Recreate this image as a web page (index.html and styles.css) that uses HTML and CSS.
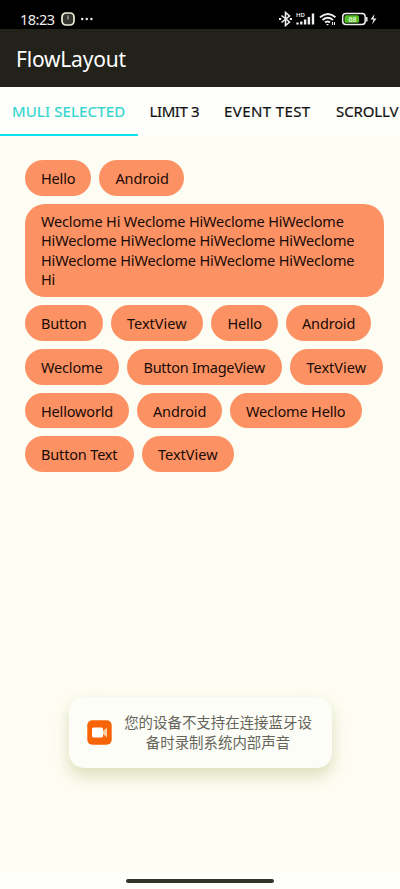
FILE: index.html
```html
<!DOCTYPE html>
<html lang="en">
<head>
<meta charset="utf-8">
<meta name="viewport" content="width=device-width, initial-scale=1">
<title>FlowLayout</title>
<link rel="stylesheet" href="styles.css">
</head>
<body>
<header class="status">
  <span class="clock">18:23</span>
  <svg class="alarm" width="14" height="14" viewBox="0 0 14 14"><rect x="1" y="1" width="12" height="12" rx="4" fill="#34342f" stroke="#eeeed8" stroke-width="1.7"/><path d="M7 3.5v4" stroke="#aaa99a" stroke-width="1.3"/></svg>
  <svg width="12" height="4" viewBox="0 0 12 4" fill="#eee"><circle cx="1.2" cy="2" r="1.2"/><circle cx="5.8" cy="2" r="1.2"/><circle cx="10.4" cy="2" r="1.2"/></svg>
  <svg class="system" width="100" height="16" viewBox="0 0 100 16" fill="none" stroke="#eee">
    <path d="M2.500 4.500l8 6.500-4 3.500v-13l4 3.500-8 6.500" stroke-width="1.600"/>
    <path d="M0 8h2.200M10.800 8H13" stroke-width="2"/>
    <text class="hd" x="17" y="5.500" stroke="none" fill="#eee">HD</text>
    <path d="M18.500 13.500v-2M22.300 13.500v-3M26.100 13.500v-5M29.900 13.500V6M34 13.500V2.500" stroke-width="2.400"/>
    <path d="M41 6.300q8-6.500 15.500 0M43.500 9q5.300-4.300 10.500 0M46 11.500q2.700-2 5 0" stroke-width="1.900"/>
    <path d="M47 13h3l-1.500 1.500z" fill="#eee" stroke="none"/><path d="M53.500 11v3M55.500 11v3" stroke-width="1.100"/>
    <rect x="63.700" y="2.500" width="22.500" height="11" rx="3.200" stroke-width="1.500"/>
    <rect x="65.500" y="4.300" width="14.500" height="7.400" rx="1.500" fill="#55bd24" stroke="none"/>
    <text class="charge" x="69.500" y="10.800" stroke="none" fill="#e8f5df">68</text>
    <path d="M87.800 6v4.500" stroke-width="1.500"/>
    <path d="M95.500 3l-4 5.500h3L93 13.500l4.500-6h-3z" fill="#eee" stroke="none"/>
  </svg>
</header>
<h1 class="appbar">FlowLayout</h1>
<nav class="tabs">
  <a class="tab active"><span>MULI SELECTED</span></a>
  <a class="tab limit"><span>LIMIT 3</span></a>
  <a class="tab event"><span>EVENT TEST</span></a>
  <a class="tab scroll"><span>SCROLLV</span></a>
</nav>
<main class="content">
  <div class="row"><span class="tag hello">Hello</span><span class="tag android">Android</span></div>
  <p class="tag long">Weclome Hi Weclome HiWeclome HiWeclome<br>HiWeclome HiWeclome HiWeclome HiWeclome<br>HiWeclome HiWeclome HiWeclome HiWeclome<br>Hi</p>
  <div class="row"><span class="tag button">Button</span><span class="tag textview">TextView</span><span class="tag hello">Hello</span><span class="tag android">Android</span></div>
  <div class="row"><span class="tag weclome">Weclome</span><span class="tag imageview">Button ImageView</span><span class="tag textview">TextView</span></div>
  <div class="row"><span class="tag helloworld">Helloworld</span><span class="tag android">Android</span><span class="tag greeting">Weclome Hello</span></div>
  <div class="row"><span class="tag buttontext">Button Text</span><span class="tag textview">TextView</span></div>
</main>
<aside class="toast">
  <svg width="25" height="25" viewBox="0 0 25 25"><rect x=".3" y=".3" width="24.400" height="24.400" rx="5" fill="#f76408"/><rect x="5" y="7.500" width="11" height="10" rx="1.500" fill="#fff"/><path d="M16 11l4-3.500v10L16 14z" fill="#ffd0a5"/></svg>
  <p lang="zh">您的设备不支持在连接蓝牙设<br>备时录制系统内部声音</p>
</aside>
<footer class="navigation"><div class="handle"></div></footer>
</body>
</html>
```

FILE: styles.css
```css
* { box-sizing: border-box; }
body {
  margin: 0;
  height: 889px;
  display: flex;
  flex-direction: column;
  overflow: hidden;
  background: #fdfdf3;
  font-family: "Noto Sans", sans-serif;
  color: #111;
}
.status {
  height: 29px;
  flex: none;
  display: flex;
  align-items: center;
  padding: 9px 21px 0 20px;
  background: #000;
  color: #eee;
}
.clock { width: 35px; font-size: 14.500px; line-height: 18px; letter-spacing: -.5px; }
.alarm { margin: 0 6px 0 6px; }
.system { margin-left: auto; }
.hd { font-size: 6px; font-weight: 600; }
.charge { font-size: 7px; font-weight: 600; }
.appbar {
  height: 58px;
  flex: none;
  margin: 0;
  padding-left: 16px;
  background: #22221a;
  color: #fff;
  font-size: 21px;
  font-weight: 400;
  letter-spacing: -.2px;
  line-height: 60px;
}
.tabs {
  height: 49px;
  flex: none;
  display: flex;
  overflow: hidden;
  background: #fefefb;
  font-size: 15px;
  line-height: 49px;
  white-space: nowrap;
  -webkit-text-stroke: .2px currentColor;
}
.tab { flex: none; padding-left: 12px; }
.active { width: 138px; letter-spacing: .15px; color: #30d5cf; border-bottom: 2px solid #0be0f1; }
.limit { width: 74px; padding-left: 11.500px; letter-spacing: -.4px; }
.event { width: 112px; letter-spacing: .4px; }
.scroll { letter-spacing: -.1px; }
.content {
  flex: 1;
  display: flex;
  flex-direction: column;
  gap: 8px;
  padding: 24px 16px 0 24.500px;
}
.row { display: flex; gap: 8px; }
.tag {
  flex: none;
  height: 35.700px;
  border-radius: 18px;
  background: #fc9264;
  color: #1a0a05;
  font-size: 14.500px;
  letter-spacing: -.16px;
  line-height: 36px;
  padding-left: 16.500px;
  white-space: nowrap;
}
.hello { width: 66.500px; }
.android { width: 85px; }
.button { width: 78px; }
.textview { width: 92.500px; letter-spacing: 0; }
.weclome { width: 94.500px; }
.imageview { width: 155px; letter-spacing: -.28px; }
.helloworld { width: 104px; }
.greeting { width: 132px; }
.buttontext { width: 109px; }
.long { margin: 0; height: 93.500px; border-radius: 20px; padding-top: 8.500px; line-height: 19.300px; }
.toast {
  position: absolute;
  left: 69px;
  top: 697px;
  width: 263px;
  height: 71px;
  border-radius: 15px;
  display: flex;
  align-items: center;
  gap: 11px;
  padding-left: 18px;
  background: #fdfdf7;
  box-shadow: 0 8px 16px rgba(150, 150, 60, .3);
}
.toast p {
  margin: 0;
  width: 190px;
  font-family: "Noto Sans CJK SC", sans-serif;
  font-size: 14.450px;
  line-height: 20px;
  text-align: center;
  color: #65655b;
  white-space: nowrap;
  position: relative;
  top: -1px;
}
.navigation {
  height: 16px;
  flex: none;
  display: flex;
  justify-content: center;
  padding-top: 6px;
  background: #fefefb;
}
.handle { width: 148px; height: 4px; border-radius: 2px; background: #34342c; }
```
